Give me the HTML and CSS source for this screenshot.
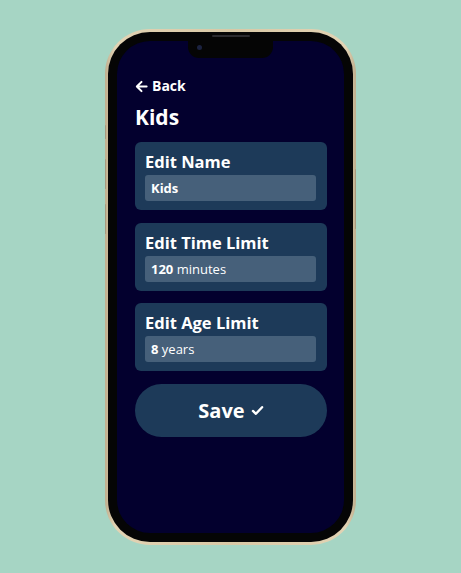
FILE: index.html
```html
<!DOCTYPE html>
<html lang="en">
<head>
<meta charset="utf-8">
<title>Edit Profile</title>
<link rel="stylesheet" href="styles.css">
</head>
<body>
<div class="phone">
  <span class="btn btn-l1"></span>
  <span class="btn btn-l2"></span>
  <span class="btn btn-l3"></span>
  <span class="btn btn-r1"></span>
  <div class="bezel">
    <span class="speaker"></span>
    <div class="screen">
      <div class="notch"><span class="camera"></span></div>
      <div class="content">
        <a class="back" href="#">
          <svg class="back-icon" viewBox="0 0 14 14" width="13" height="13" aria-hidden="true">
            <path d="M12.5 7H2.2M7 2 2 7l5 5" fill="none" stroke="#fff" stroke-width="2.2" stroke-linecap="round" stroke-linejoin="round"/>
          </svg>
          <span>Back</span>
        </a>
        <h1 class="title">Kids</h1>
        <div class="card">
          <div class="card-title">Edit Name</div>
          <div class="field"><b>Kids</b></div>
        </div>
        <div class="card">
          <div class="card-title">Edit Time Limit</div>
          <div class="field"><b>120</b> minutes</div>
        </div>
        <div class="card">
          <div class="card-title">Edit Age Limit</div>
          <div class="field"><b>8</b> years</div>
        </div>
        <button class="save" type="button">Save
          <svg class="check" viewBox="0 0 14 12" width="13" height="11" aria-hidden="true">
            <path d="M2 6.5 5.3 9.6 12 2.4" fill="none" stroke="#fff" stroke-width="2.6" stroke-linecap="round" stroke-linejoin="round"/>
          </svg>
        </button>
      </div>
    </div>
  </div>
</div>
</body>
</html>
```
FILE: styles.css
```css
* { box-sizing: border-box; }
html, body { margin: 0; padding: 0; }
body {
  width: 461px;
  height: 573px;
  background: #a6d5c4;
  font-family: "Open Sans", "Liberation Sans", sans-serif;
  color: #fff;
  overflow: hidden;
}
.phone {
  position: relative;
  width: 251px;
  height: 516px;
  margin: 29px 0 0 105px;
  padding: 3px;
  border-radius: 45px;
  background: linear-gradient(90deg, #bfae8e 0%, #e2d3b4 4%, #d8c8a6 50%, #e2d3b4 96%, #bfae8e 100%);
}
.btn {
  position: absolute;
  width: 1px;
  background: #a8997e;
  border-radius: 1px;
}
.btn-l1 { left: 0; top: 96px; height: 14px; }
.btn-l2 { left: 0; top: 130px; height: 30px; }
.btn-l3 { left: 0; top: 175px; height: 30px; }
.btn-r1 { right: 0; top: 140px; height: 60px; }
.bezel {
  position: relative;
  height: 100%;
  padding: 9px;
  border-radius: 42px;
  background: #050505;
}
.speaker {
  position: absolute;
  left: 104px;
  top: 3px;
  width: 38px;
  height: 2px;
  border-radius: 1px;
  background: #2a2a2e;
}
.screen {
  position: relative;
  height: 100%;
  border-radius: 33px;
  background: #03002e;
  overflow: hidden;
}
.notch {
  position: absolute;
  left: 71px;
  top: 0;
  width: 85px;
  height: 17px;
  background: #050505;
  border-radius: 0 0 11px 11px;
}
.camera {
  position: absolute;
  left: 9px;
  top: 4px;
  width: 5px;
  height: 5px;
  border-radius: 50%;
  background: #1b2240;
}
.content {
  padding: 37px 17px 0 18px;
  display: flex;
  flex-direction: column;
}
.back {
  display: flex;
  align-items: center;
  gap: 4px;
  color: #fff;
  text-decoration: none;
  font-weight: 700;
  font-size: 14px;
  line-height: 16px;
  height: 16px;
}
.back-icon { display: block; }
.title {
  margin: 12px 0 14px;
  font-size: 21px;
  line-height: 22px;
  font-weight: 700;
}
.card {
  background: #1d3a59;
  border-radius: 6px;
  padding: 10px 11px 9px 10px;
  margin-bottom: 12.5px;
}
.card-title {
  font-size: 16.5px;
  font-weight: 700;
  line-height: 20px;
  margin-bottom: 3px;
}
.field {
  height: 26px;
  background: #46607a;
  border-radius: 3px;
  padding: 0 6px;
  font-size: 13px;
  line-height: 26px;
  font-weight: 400;
}
.field b { font-weight: 700; }
.save {
  height: 53px;
  border: 0;
  border-radius: 27px;
  background: #1d3a59;
  color: #fff;
  font-family: inherit;
  font-size: 20px;
  font-weight: 700;
  display: flex;
  align-items: center;
  justify-content: center;
  gap: 6px;
  padding: 0;
}
.check { display: block; }
```
